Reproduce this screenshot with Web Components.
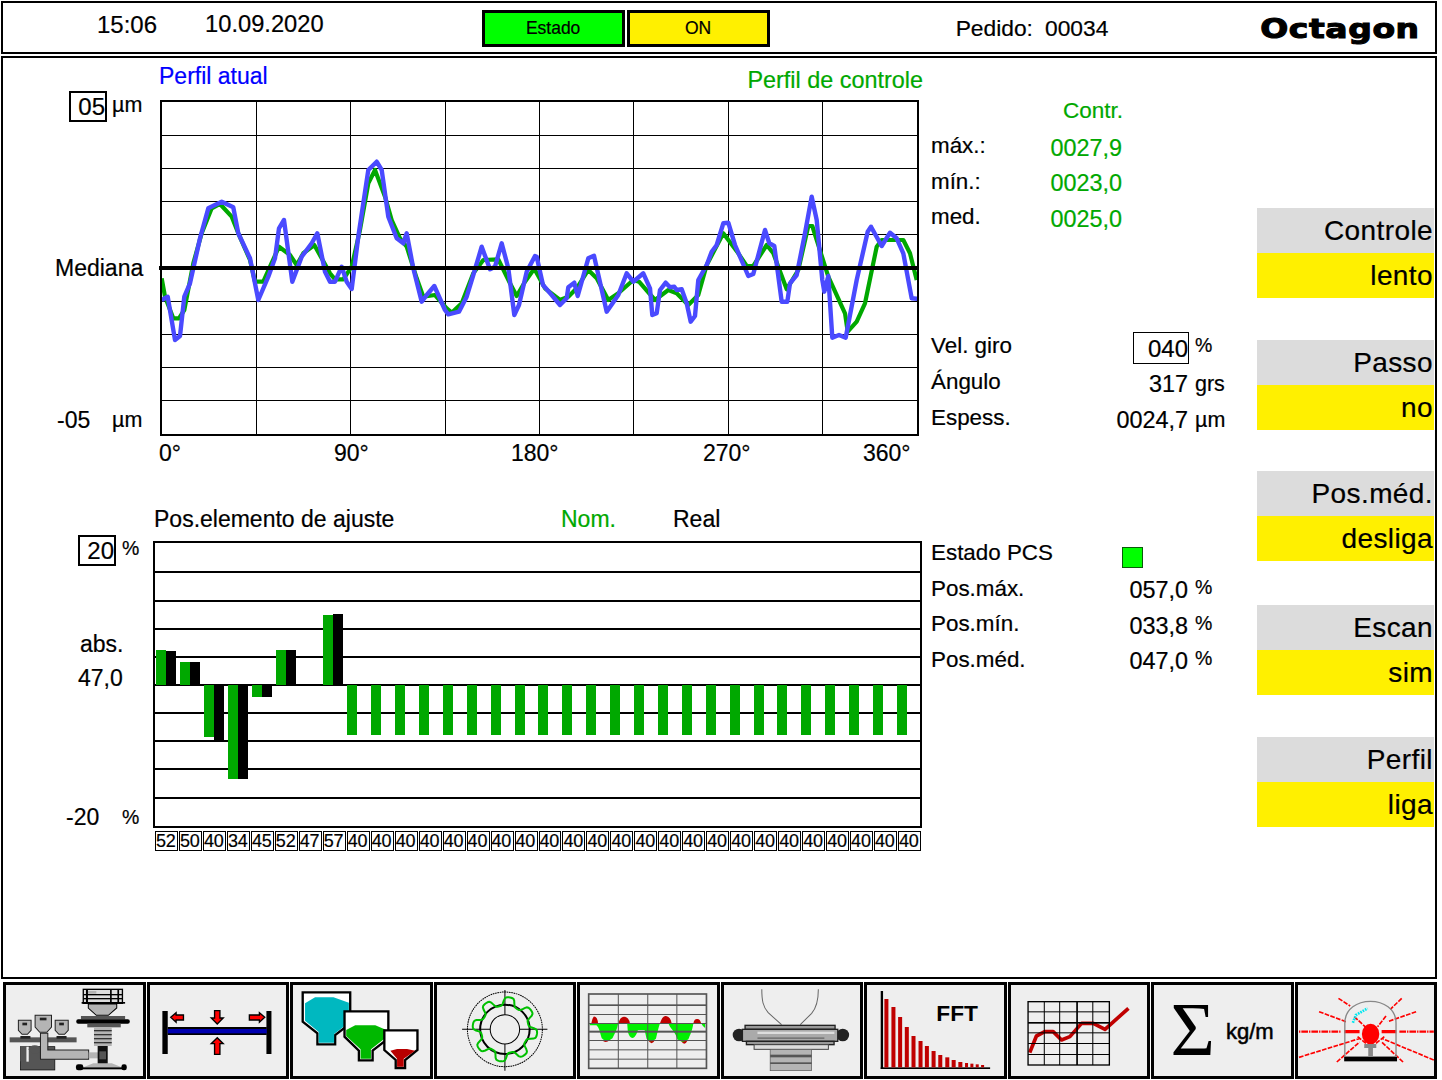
<!DOCTYPE html>
<html lang="pt"><head><meta charset="utf-8"><title>Octagon</title>
<style>
html,body{margin:0;padding:0;background:#fff;color:#000;font-family:"Liberation Sans",Arial,sans-serif;font-size:23px;-webkit-text-stroke:.2px}
body{padding:1px 0 0 1px;width:1436px;overflow:hidden}
</style></head><body>
<op-screen>
  <op-header slot="header" time="15:06" date="10.09.2020" order="00034"></op-header>
  <op-profile slot="left"></op-profile>
  <op-actuators slot="left"></op-actuators>
  <op-stats slot="stats"></op-stats>
  <mode-button slot="modes" value="lento">Controle</mode-button>
  <mode-button slot="modes" value="no" style="margin-top:42px">Passo</mode-button>
  <mode-button slot="modes" value="desliga" style="margin-top:41px">Pos.méd.</mode-button>
  <mode-button slot="modes" value="sim" style="margin-top:44px">Escan</mode-button>
  <mode-button slot="modes" value="liga" style="margin-top:42px">Perfil</mode-button>
  <tool-button slot="tools" kind="line"></tool-button>
  <tool-button slot="tools" kind="sheet"></tool-button>
  <tool-button slot="tools" kind="hoppers"></tool-button>
  <tool-button slot="tools" kind="ring"></tool-button>
  <tool-button slot="tools" kind="trend"></tool-button>
  <tool-button slot="tools" kind="die"></tool-button>
  <tool-button slot="tools" kind="fft"></tool-button>
  <tool-button slot="tools" kind="graph"></tool-button>
  <tool-button slot="tools" kind="sum"></tool-button>
  <tool-button slot="tools" kind="alarm"></tool-button>
</op-screen>
<script>
function def(name, css, html, init){
  customElements.define(name, class extends HTMLElement{
    constructor(){super();this.attachShadow({mode:'open'});}
    connectedCallback(){
      const h = typeof html==='function'?html(this):html;
      this.shadowRoot.innerHTML='<style>:host{box-sizing:border-box}*{box-sizing:border-box}'+css+'</style>'+h;
      if(init)init(this);
    }
  });
}
def('op-screen',`
 :host{display:block;width:1436px}
 .main{display:grid;grid-template-columns:922px 328px 182px;height:923px;margin-top:2px;border:2px solid #000}
 .left{display:block}
 .stats{padding-left:6px}
 .modes{display:flex;flex-direction:column;padding:150px 0 0 4px}
 .tools{display:flex;gap:1px;height:97px;margin:3px 0 0 2px}
`,`<slot name="header"></slot>
 <div class="main"><div class="left"><slot name="left"></slot></div><div class="stats"><slot name="stats"></slot></div><div class="modes"><slot name="modes"></slot></div></div>
 <div class="tools"><slot name="tools"></slot></div>`);

def('state-chip',`
 :host{display:flex;align-items:center;justify-content:center;width:143px;height:37px;border:3px solid #000;background:var(--bg);font-size:17.5px}
`,`<slot></slot>`);

def('op-logo',`
 :host{display:block;font-family:"DejaVu Sans",sans-serif;font-weight:700;font-size:27px;line-height:30px;letter-spacing:.5px;transform:scaleX(1.22);transform-origin:right center;-webkit-text-stroke:1.1px #000;white-space:nowrap}
`,`<slot></slot>`);

def('op-header',`
 :host{display:flex;align-items:center;height:53px;border:2px solid #000;font-size:23.7px}
 .t{margin:-6px 0 0 94px;font-size:24px}.d{margin:-6px 0 0 48px}
 .c{display:flex;gap:2px;margin:2px 0 0 158px}
 .o{margin:2px 0 0 186px;display:flex;gap:12px;font-size:22.8px}
 op-logo{margin-left:auto;margin-right:15px;margin-top:3px}
`,h=>`<span class="t">${h.getAttribute('time')}</span><span class="d">${h.getAttribute('date')}</span>
 <span class="c"><state-chip style="--bg:#00ff00">Estado</state-chip><state-chip style="--bg:#fff000">ON</state-chip></span>
 <span class="o"><span>Pedido:</span><span>${h.getAttribute('order')}</span></span><op-logo>Octagon</op-logo>`);

def('scale-box',`
 :host{display:flex;align-items:center;justify-content:flex-end;width:38px;height:31px;border:2px solid #000;font-size:24px}
`,`<slot></slot>`);

const B1=[[20,450],[38,440],[60,570],[75,558],[88,440],[105,400],[135,265],[160,175],[200,155],[235,172],[250,250],[285,325],[310,450],[340,380],[360,325],[372,235],[387,210],[412,395],[440,320],[470,280],[487,250],[510,365],[525,395],[540,395],[560,350],[575,395],[590,417],[610,260],[640,60],[665,35],[680,60],[700,200],[725,265],[745,280],[755,250],[775,355],[800,455],[815,435],[838,408],[870,480],[880,493],[912,485],[935,440],[955,375],[980,290],[1005,358],[1020,350],[1040,280],[1060,355],[1078,495],[1092,465],[1115,365],[1140,318]];
const B2=[[5,200],[24,285],[50,315],[75,345],[95,325],[100,292],[118,278],[128,318],[160,205],[177,197],[215,365],[250,315],[275,250],[295,275],[325,250],[345,295],[352,375],[365,370],[375,300],[392,278],[405,292],[418,290],[425,300],[440,298],[455,340],[467,395],[480,378],[490,270],[515,225],[530,185],[545,165],[565,100],[580,98],[600,165],[640,258],[655,252],[690,120],[703,160],[718,168],[740,335],[757,335],[765,280],[785,255],[810,130],[830,20],[845,90],[862,270],[868,305],[880,258],[892,443],[912,435],[932,443],[965,270],[998,125],[1008,110],[1040,168],[1065,128],[1085,145],[1105,190],[1130,325],[1152,327]];
const G1=[[20,385],[30,440],[55,505],[72,505],[88,480],[115,340],[140,250],[170,175],[195,162],[230,200],[250,250],[285,330],[300,395],[325,395],[345,350],[372,290],[405,315],[425,345],[445,310],[478,285],[525,370],[540,388],[565,388],[590,350],[615,240],[640,100],[660,60],[690,140],[710,210],[735,265],[755,290],[785,385],[805,440],[840,435],[875,475],[890,488],[920,460],[955,370],[985,330],[1030,328],[1065,400],[1085,438],[1110,395],[1135,360]];
const G2=[[0,240],[30,295],[75,330],[100,320],[125,295],[160,240],[185,265],[220,330],[250,310],[295,270],[312,275],[360,330],[400,300],[425,310],[460,345],[490,315],[515,225],[565,130],[610,190],[635,228],[655,228],[695,165],[715,190],[755,298],[790,240],[820,108],[832,108],[880,260],[930,370],[938,425],[965,395],[990,340],[1025,170],[1040,150],[1105,150],[1125,190],[1145,270]];
const pts=(a,b)=>a.map(([x,y])=>[155+x/3,150+y/3]).concat(b.map(([x,y])=>[535+x/3,190+y/3])).map(p=>p[0].toFixed(1)+','+p[1].toFixed(1)).join(' ');

function profileSvg(){
  const xs=[256,350,445,539,633,728,822], ys=[135,168,201,234,301,334,367,400];
  let s='<svg width="762" height="336" viewBox="157 100 762 336" aria-hidden="true">';
  s+='<defs><clipPath id="c"><rect x="160" y="100" width="759" height="336"/></clipPath></defs>';
  xs.forEach(x=>s+=`<rect x="${x}" y="100" width="1" height="335"/>`);
  ys.forEach(y=>s+=`<rect x="160" y="${y}" width="758" height="1"/>`);
  s+=`<g clip-path="url(#c)" fill="none" stroke-linejoin="round"><polyline points="${pts(G1,G2)}" stroke="#00a800" stroke-width="4.2"/><polyline points="${pts(B1,B2)}" stroke="#4a4aff" stroke-width="4.4"/></g>`;
  s+='<rect x="159" y="266" width="760" height="4"/><rect x="161" y="101" width="757" height="334" fill="none" stroke="#000" stroke-width="2"/>';
  return s+'</svg>';
}
def('op-profile',`
 :host{display:block;height:409px}
 .head{display:flex;align-items:flex-start;height:42px;padding:0 2px 0 156px}
 .blue{color:#0000ff;margin-top:4px;line-height:28px;font-size:23px}
 .green{color:#00a800;margin:8px 0 0 auto;line-height:28px;font-size:23.4px}
 .row{display:flex;height:336px}
 .axis{width:154px;margin-top:-9px;flex:none}
 .line{display:flex;align-items:center;height:26px}
 svg{display:block;flex:none}
 .um{font-size:21.5px}
 .ticks{display:grid;grid-template-columns:175px 177px 192px 160px auto;padding-left:156px;margin-top:4px;line-height:26px;font-size:23px}
`,()=>`<div class="head"><span class="blue">Perfil atual</span><span class="green">Perfil de controle</span></div>
 <div class="row"><div class="axis">
   <div class="line" style="height:31px;padding-left:66px"><scale-box>05</scale-box><span class="um" style="margin:-3px 0 0 5px">µm</span></div>
   <div class="line" style="margin-top:133px;padding-left:52px">Mediana</div>
   <div class="line" style="margin-top:126px;padding-left:54px"><span style="width:55px">-05</span><span class="um">µm</span></div>
 </div>${profileSvg()}</div>
 <div class="ticks"><span>0°</span><span>90°</span><span>180°</span><span>270°</span><span>360°</span></div>`);

const LABELS=[52,50,40,34,45,52,47,57].concat(Array(24).fill(40));
const GREEN=[650,662,737,779,697,650,null,615].concat(Array(24).fill(735));
const BLACK=[651,662,739,778,696,650,null,614];
function barsSvg(){
  let s='<svg width="769" height="287" viewBox="153 541 769 287" aria-hidden="true">';
  [571,600,628,656,684,712,740,768,797].forEach(y=>s+=`<rect x="155" y="${y}" width="765" height="2"/>`);
  GREEN.forEach((t,i)=>{ if(t===null)return;
    const x=Math.round(156+i*23.9), z=685;
    s+=`<rect x="${x}" y="${Math.min(t,z)}" width="10" height="${Math.abs(t-z)}" fill="#00a800"/>`;
    if(BLACK[i]!=null){const b=BLACK[i]; s+=`<rect x="${x+10}" y="${Math.min(b,z)}" width="10" height="${Math.abs(b-z)+1}"/>`;}
  });
  s+='<rect x="154" y="542" width="767" height="285" fill="none" stroke="#000" stroke-width="2"/>';
  return s+'</svg>';
}
def('op-actuators',`
 :host{display:block}
 .head{display:grid;grid-template-columns:407px 112px auto;padding-left:151px;line-height:28px;margin-top:38px;font-size:23px}
 .nom{color:#00a800}
 .row{display:flex;height:287px;margin-top:8px}
 .axis{width:150px;flex:none;margin-top:-6px}
 .line{display:flex;align-items:center;height:26px}
 .pc{font-size:19.5px;line-height:18px}
 svg{display:block;flex:none}
 .labels{display:flex;gap:1px;margin:3px 0 0 152px;width:766px}
 .labels span{flex:1 1 0;height:20px;border:1px solid #000;font-size:18px;line-height:19px;white-space:nowrap;overflow:visible;min-width:0;letter-spacing:-.2px}
`,()=>`<div class="head"><span>Pos.elemento de ajuste</span><span class="nom">Nom.</span><span>Real</span></div>
 <div class="row"><div class="axis">
   <div class="line" style="height:31px;padding-left:75px"><scale-box>20</scale-box><span class="pc" style="margin:-6px 0 0 6px">%</span></div>
   <div class="line" style="margin-top:65px;padding-left:77px">abs.</div>
   <div class="line" style="margin-top:8px;padding-left:75px">47,0</div>
   <div class="line" style="margin-top:113px;padding-left:63px"><span style="width:56px">-20</span><span class="pc">%</span></div>
 </div>${barsSvg()}</div>
 <div class="labels">${LABELS.map(n=>`<span>${n}</span>`).join('')}</div>`);

def('stat-row',`
 :host{display:flex;align-items:center;height:26px;white-space:nowrap}
 .w{display:flex;align-items:center;justify-content:space-between;width:var(--end,257px)}
 .l{margin-top:-4px;font-size:22.4px}
 .v{font-size:23.4px;color:var(--val,#000)}
 .u{margin-left:7px;font-size:21.5px}
 .u.p{font-size:19.5px;margin-top:-6px}
 .box{display:block;width:56px;height:32px;line-height:31px;margin:-2px -1px -2px 0;border:1px solid #000;text-align:right;font-size:24px}
`,h=>{
  const u=h.getAttribute('unit')||'', boxed=h.hasAttribute('boxed');
  return `<div class="w"><span class="l"><slot></slot></span><span class="v ${boxed?'box':''}"><slot name="v">${h.getAttribute('value')||''}</slot></span></div>${u?`<span class="u ${u==='%'?'p':''}">${u}</span>`:''}`;
});

def('op-stats',`
 :host{display:block}
 .c{color:#00a800;text-align:right;width:192px;height:26px;line-height:26px;margin-top:40px;font-size:22.5px}
 .g{display:flex;flex-direction:column}
 .top{--end:191px;--val:#00a800;gap:9.5px;margin-top:11px}
 .mid{gap:10px;margin-top:103px}
 .low{gap:9.5px;margin-top:109px}
`,`<div class="c">Contr.</div>
 <div class="g top"><stat-row value="0027,9">máx.:</stat-row><stat-row value="0023,0">mín.:</stat-row><stat-row value="0025,0">med.</stat-row></div>
 <div class="g mid"><stat-row value="040" unit="%" boxed>Vel. giro</stat-row><stat-row value="317" unit="grs">Ángulo</stat-row><stat-row value="0024,7" unit="µm">Espess.</stat-row></div>
 <div class="g low"><stat-row>Estado PCS<span slot="v" style="display:block;width:21px;height:21px;background:#00ff00;border:1px solid #0a5a0a;margin:5px 45px 0 0"></span></stat-row><stat-row value="057,0" unit="%">Pos.máx.</stat-row><stat-row value="033,8" unit="%">Pos.mín.</stat-row><stat-row value="047,0" unit="%">Pos.méd.</stat-row></div>`);

def('mode-button',`
 :host{display:block;width:177px;font-size:28px;letter-spacing:.4px;text-align:right;flex:none}
 div{height:45px;line-height:45px;padding-right:1px}
 .a{background:#dcdcdc}.b{background:#fff000}
`,h=>`<div class="a"><slot></slot></div><div class="b">${h.getAttribute('value')}</div>`);

function ringPath(){
  let d='';
  for(let i=0;i<=160;i++){const t=i/160*Math.PI*2;const s=Math.sin(8*t+.4);const r=84+13*Math.tanh(2.2*s);
    d+=(i?'L':'M')+(70+r*Math.cos(t)).toFixed(1)+','+(148+r*Math.sin(t)).toFixed(1);}
  return d+'Z';
}
const R='#ff0000',DR='#c00000',GY='#b4b4b4',DG='#555';
const ICONS={
 line:[19,`
  <rect x="62" y="200" width="103" height="70" fill="${DG}" stroke="#000" stroke-width="2"/><path d="M62,198h18v46h-18z" fill="${DG}"/><rect x="80" y="200" width="7" height="45" fill="#eee"/><ellipse cx="105" cy="208" rx="18" ry="12" fill="${DG}"/>
  <rect x="30" y="172" width="200" height="15" fill="${DG}"/>
  <path d="M122,160h22v50h122v28h-144z" fill="${GY}" stroke="#222" stroke-width="3"/><rect x="266" y="217" width="28" height="18" fill="${GY}"/>
  <g fill="${GY}" stroke="#222" stroke-width="3"><path d="M106,106h49v35l-14,16h-21l-14,-16z"/><path d="M56,121h38v30l-11,12h-16l-11,-12z"/><path d="M166,121h39v30l-11,12h-17l-11,-12z"/></g>
  <g fill="#222"><rect x="120" y="113" width="20" height="8"/><rect x="68" y="128" width="14" height="8"/><rect x="178" y="128" width="14" height="8"/><rect x="62" y="168" width="30" height="8"/><rect x="170" y="168" width="30" height="8"/></g>
  <rect x="250" y="28" width="117" height="42" fill="#ddd" stroke="#000" stroke-width="4"/><g fill="#000"><rect x="245" y="66" width="130" height="5"/><rect x="250" y="42" width="117" height="4"/><rect x="250" y="54" width="117" height="4"/><rect x="258" y="28" width="6" height="42"/><rect x="330" y="28" width="5" height="42"/><rect x="352" y="28" width="5" height="42"/></g><rect x="264" y="33" width="25" height="8" fill="${GY}"/>
  <path d="M265,72h85v12l-25,22h-36l-24,-22z" fill="${GY}" stroke="#000" stroke-width="3"/>
  <rect x="243" y="108" width="132" height="10" fill="${DG}"/><rect x="229" y="118" width="160" height="13" rx="6"/><rect x="262" y="131" width="100" height="11" fill="${DG}"/>
  <rect x="282" y="142" width="53" height="56" fill="${GY}"/><g fill="#333"><rect x="282" y="150" width="53" height="4"/><rect x="282" y="162" width="53" height="4"/><rect x="282" y="174" width="53" height="4"/><rect x="282" y="186" width="53" height="4"/></g>
  <rect x="293" y="198" width="30" height="54" fill="#111"/><rect x="298" y="214" width="20" height="24" fill="${DG}"/>
  <path d="M250,262l30,-12h55l30,12z" fill="${GY}"/><rect x="228" y="253" width="22" height="18" rx="7"/><rect x="364" y="253" width="16" height="18" rx="7"/><rect x="245" y="262" width="125" height="6"/>`],
 sheet:[447,`
  <rect x="484" y="93" width="16" height="129"/><rect x="795" y="93" width="15" height="129"/><rect x="500" y="141" width="296" height="24"/><rect x="500" y="147" width="296" height="13" fill="#0000b0"/>
  <g fill="${R}" stroke="#000" stroke-width="4"><path d="M509,112l16,-14v7h22v15h-22v7z"/><path d="M790,112l-16,-14v7h-30v15h30v7z"/><path d="M648,132l-18,-18h10v-22h16v22h10z"/><path d="M648,173l-18,18h10v32h16v-32h10z"/></g>`],
 hoppers:[879,`
  <path d="M908,37H1050V130L1005,165V193H952V160L908,125Z" fill="#fff" stroke="#000" stroke-width="7"/>
  <path d="M915,70L945,52H1000L1046,68V128L1002,162V188H956V156L915,122Z" fill="#00b8c0"/>
  <path d="M1033,94H1164V175L1117,212V241H1076V212L1033,170Z" fill="#fff" stroke="#000" stroke-width="7"/>
  <path d="M1038,150L1065,136H1125L1158,150V172L1112,208V236H1081V208L1038,168Z" fill="#00b800"/>
  <path d="M1152,151H1251V210L1214,240V264H1186V240L1152,210Z" fill="#fff" stroke="#000" stroke-width="7"/>
  <path d="M1170,212L1190,207H1220L1244,212L1210,236V260H1190V236Z" fill="#b80000"/>`],
 ring:[-133,`
  <circle cx="70" cy="148" r="112" fill="none" stroke="#000" stroke-width="3" stroke-dasharray="5 2"/>
  <path d="M-58,148H197M70,30V272" stroke="#000" stroke-width="3"/>
  <circle cx="70" cy="148" r="74" fill="none" stroke="#000" stroke-width="6"/>
  <circle cx="70" cy="148" r="44" fill="#eee" stroke="#000" stroke-width="3"/>
  <path d="${ringPath()}" fill="none" stroke="#00c000" stroke-width="6"/>`],
 trend:[301,`
  <g fill="${DR}"><path d="M335,130q4,-22 10,-20q8,0 10,20z"/><path d="M417,130q2,-20 16,-20q14,0 17,20z"/><path d="M540,130q8,-24 18,-22q14,2 17,22z"/><path d="M640,130q2,-14 12,-13q8,0 11,13z"/><path d="M367,180q10,12 23,0z"/><path d="M505,180q10,20 20,0z"/><path d="M603,182q10,18 19,0z"/></g>
  <path fill="#00f000" d="M330,130H415C412,150 405,160 398,175Q380,190 366,175C362,165 360,145 350,136H330ZM442,130H540C535,145 532,160 528,176Q512,192 500,176L494,150H474C470,165 465,172 458,174Q448,172 444,155ZM565,130H640C636,155 630,165 625,178Q608,192 592,178C588,160 575,148 570,140ZM663,130H675V144Q668,140 663,130Z"/>
  <g fill="#555"><rect x="328" y="73" width="352" height="5"/><rect x="328" y="102" width="352" height="3"/><rect x="328" y="129" width="352" height="3"/><rect x="328" y="152" width="352" height="6"/><rect x="328" y="180" width="352" height="3"/><rect x="328" y="208" width="352" height="3"/><rect x="328" y="236" width="352" height="3"/><rect x="414" y="42" width="3" height="222"/><rect x="502" y="42" width="3" height="222"/><rect x="589" y="42" width="3" height="222"/></g>
  <rect x="327" y="42" width="352" height="223" fill="none" stroke="#555" stroke-width="5"/>`],
 die:[730,`
  <path d="M843,28C843,60 846,80 862,98L902,134M1012,28C1012,60 1008,82 992,100L958,134" fill="none" stroke="#666" stroke-width="3"/>
  <circle cx="775" cy="165" r="19" fill="#222"/><circle cx="1085" cy="165" r="19" fill="#222"/>
  <rect x="793" y="136" width="269" height="12" fill="#999" stroke="#222" stroke-width="4"/>
  <rect x="785" y="148" width="285" height="36" fill="#aaa" stroke="#222" stroke-width="4"/><rect x="830" y="155" width="230" height="7" fill="#ddd"/><rect x="830" y="172" width="200" height="5" fill="#777"/>
  <rect x="797" y="184" width="262" height="10" fill="#999" stroke="#222" stroke-width="4"/><rect x="820" y="194" width="222" height="14" fill="#ddd" stroke="#444" stroke-width="3"/>
  <rect x="868" y="208" width="124" height="64" fill="${GY}" stroke="#555" stroke-width="2"/><rect x="868" y="224" width="124" height="8" fill="#555"/><rect x="868" y="247" width="124" height="5" fill="#555"/>`],
 fft:[1157,`
  <rect x="1198" y="33" width="7" height="234"/><rect x="1198" y="262" width="327" height="5"/>
  <g fill="${DR}">${[[1209,57],[1230,81],[1250,111],[1270,141],[1290,168],[1311,183],[1330,198],[1350,213],[1370,225],[1391,232],[1410,240],[1430,246],[1450,249],[1466,251],[1482,253],[1498,255]].map(([x,t])=>`<rect x="${x}" y="${t}" width="${x<1440?12:9}" height="${262-t}"/>`).join('')}</g>
  <text x="1364" y="123" font-family="Liberation Sans,sans-serif" font-size="68" font-weight="700">FFT</text>`],
 graph:[149,`
  <path d="M205,218L225,168L250,155L275,155L300,180L325,170L360,130L395,130L430,148L500,85" fill="none" stroke="${DR}" stroke-width="11" stroke-linejoin="round"/>
  <g fill="#000"><rect x="247" y="65" width="3" height="190"/><rect x="293" y="65" width="3" height="190"/><rect x="344" y="65" width="5" height="190"/><rect x="392" y="65" width="3" height="190"/><rect x="200" y="94" width="243" height="3"/><rect x="200" y="126" width="243" height="5"/><rect x="200" y="157" width="243" height="3"/><rect x="200" y="189" width="243" height="3"/><rect x="200" y="222" width="243" height="3"/></g>
  <rect x="200" y="65" width="243" height="190" fill="none" stroke="#000" stroke-width="4"/>`],
 sum:[579,`
  <text x="628" y="226" font-family="Liberation Serif,serif" font-size="228">Σ</text>
  <text x="794" y="178" font-family="Liberation Sans,sans-serif" font-size="66" stroke="#000" stroke-width="1.5">kg/m</text>`],
 alarm:[1012,`
  <g fill="none" stroke="${R}"><path d="M1015,155H1140" stroke-width="7" stroke-dasharray="4 3 20 3"/><path d="M1315,155H1418" stroke-width="7" stroke-dasharray="20 3 4 3"/><path d="M1150,155H1196M1262,155H1306" stroke-width="10"/>
  <path d="M1075,95L1155,125M1133,55L1168,78M1365,95L1280,125M1322,55L1288,88M1015,232L1198,175M1418,240L1262,175M1128,246L1196,186M1326,246L1262,186M1180,110L1215,142M1275,108L1250,140M1190,170L1215,190M1270,170L1245,190" stroke-width="5" stroke-dasharray="14 4"/></g>
  <path d="M1152,232V130C1152,42 1305,42 1305,130V232" fill="none" stroke="#888" stroke-width="4"/>
  <path d="M1176,128L1185,105L1220,85" fill="none" stroke="#00e8f0" stroke-width="8" stroke-dasharray="5 3"/>
  <ellipse cx="1229" cy="162" rx="26" ry="31" fill="${R}"/>
  <path d="M1210,192H1246V204H1236V230H1222V204H1210Z" fill="#888"/><rect x="1150" y="230" width="158" height="14"/><rect x="1150" y="228" width="158" height="3" fill="#888"/>`]
};
def('tool-button',`
 :host{display:block;flex:1 1 0;min-width:0;border:3px solid #000;background:#eee;-webkit-text-stroke:0}
 svg{display:block;width:100%;height:100%}
`,h=>{const [x,c]=ICONS[h.getAttribute('kind')];return `<svg viewBox="${x} 15 408 273" preserveAspectRatio="none">${c}</svg>`;});
</script>
</body></html>
